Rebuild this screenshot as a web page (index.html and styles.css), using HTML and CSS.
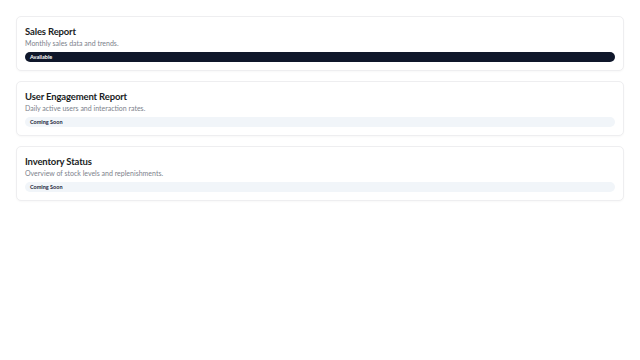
FILE: index.html
```html
<!DOCTYPE html>
<html lang="en">
<head>
    <meta charset="UTF-8">
    <meta name="viewport" content="width=device-width, initial-scale=1.0">
    <title>Reports</title>
    <link rel="stylesheet" href="styles.css">
</head>
<body>
    <div class="report-list">
        <div class="card">
            <h2 class="card-title">Sales Report</h2>
            <p class="card-desc">Monthly sales data and trends.</p>
            <div class="badge badge-available">Available</div>
        </div>

        <div class="card">
            <h2 class="card-title">User Engagement Report</h2>
            <p class="card-desc">Daily active users and interaction rates.</p>
            <div class="badge badge-soon">Coming Soon</div>
        </div>

        <div class="card">
            <h2 class="card-title">Inventory Status</h2>
            <p class="card-desc">Overview of stock levels and replenishments.</p>
            <div class="badge badge-soon">Coming Soon</div>
        </div>
    </div>
</body>
</html>
```

FILE: styles.css
```css
body {
    font-family: 'Lato', 'Open Sans', sans-serif;
    margin: 0;
    padding: 16px;
    background: #ffffff;
    color: #111827;
}
.report-list {
    display: flex;
    flex-direction: column;
    gap: 10px;
}
.card {
    border: 1px solid #eeeef0;
    border-radius: 5px;
    padding: 9px 8px 8px;
    background: #fff;
    box-shadow: 0 1px 2px rgba(0, 0, 0, 0.03);
}
.card-title {
    margin: 0;
    font-size: 9.5px;
    line-height: 12px;
    font-weight: 700;
    letter-spacing: -0.15px;
    color: #1a1d23;
}
.card-desc {
    margin: 0;
    font-size: 7px;
    line-height: 11px;
    color: #7c818b;
}
.badge {
    margin-top: 3px;
    height: 10px;
    line-height: 10px;
    padding: 0 5px;
    border-radius: 5px;
    font-size: 5.5px;
    font-weight: 700;
}
.badge-available {
    background: #0f172a;
    color: #fff;
}
.badge-soon {
    background: #f1f5f9;
    color: #1e293b;
}
```
